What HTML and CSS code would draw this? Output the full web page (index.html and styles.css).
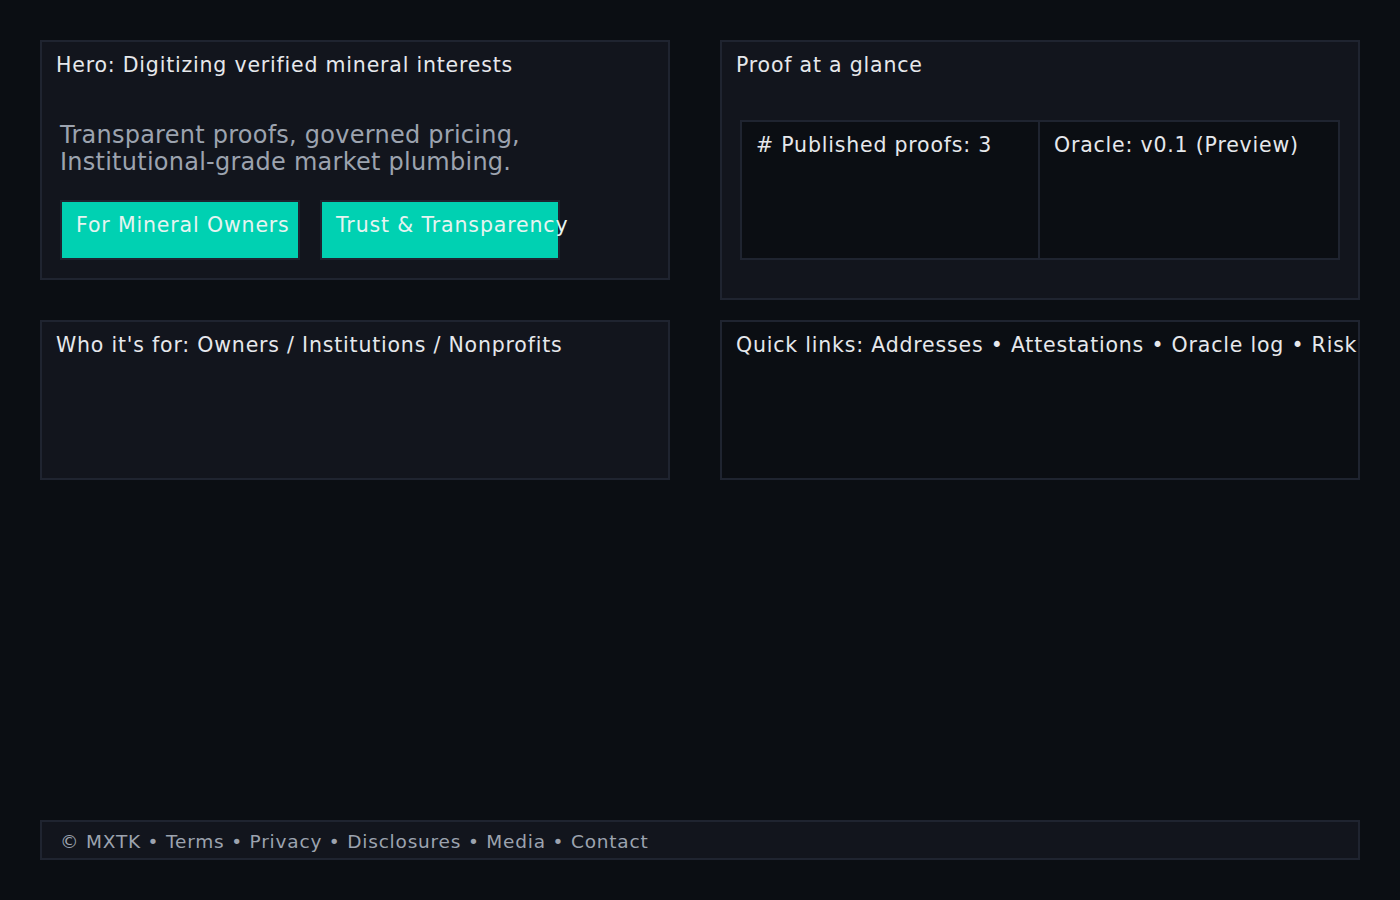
FILE: index.html
```html
<!DOCTYPE html>
<html lang="en">
<head>
<meta charset="utf-8">
<title>MXTK</title>
<link rel="stylesheet" href="styles.css">
</head>
<body>
<div class="page">
  <main class="grid">
    <section class="card hero">
      <h2 class="card-title">Hero: Digitizing verified mineral interests</h2>
      <div class="card-body">
        <p class="subtitle">Transparent proofs, governed pricing,<br>Institutional-grade market plumbing.</p>
        <div class="actions">
          <a class="btn">For Mineral Owners</a>
          <a class="btn">Trust &amp; Transparency</a>
        </div>
      </div>
    </section>
    <section class="card proof">
      <h2 class="card-title">Proof at a glance</h2>
      <div class="card-body">
        <div class="stats">
          <div class="stat">
            <div class="stat-text"># Published proofs: 3</div>
          </div>
          <div class="stat">
            <div class="stat-text">Oracle: v0.1 (Preview)</div>
          </div>
        </div>
      </div>
    </section>
    <section class="card short">
      <h2 class="card-title">Who it's for: Owners / Institutions / Nonprofits</h2>
    </section>
    <section class="card short dark">
      <h2 class="card-title">Quick links: Addresses • Attestations • Oracle log • Risk</h2>
    </section>
  </main>
  <footer class="footer">© MXTK • Terms • Privacy • Disclosures • Media • Contact</footer>
</div>
</body>
</html>
```

FILE: styles.css
```css
* { box-sizing: border-box; }
html, body {
  margin: 0;
  padding: 0;
  background: #0b0e13;
  color: #e6e8ec;
  font-family: "DejaVu Sans", sans-serif;
}
.page {
  min-height: 900px;
  padding: 40px;
  display: flex;
  flex-direction: column;
}
.grid {
  display: grid;
  grid-template-columns: 630px 640px;
  column-gap: 50px;
  row-gap: 20px;
  align-items: start;
}
.card {
  background: #12151d;
  border: 2px solid #1f2430;
}
.card.dark { background: #0b0e13; }
.hero { height: 240px; }
.proof { height: 260px; }
.short { height: 160px; }
.card-title {
  margin: 0;
  font-weight: normal;
  font-size: 20.5px;
  line-height: 23px;
  letter-spacing: 0.8px;
  padding: 12px 14px 43px;
  white-space: nowrap;
}
.card-body {
  padding: 0 18px 18px;
}
.subtitle {
  margin: 2px 0 0;
  font-size: 24px;
  line-height: 27px;
  letter-spacing: 0.25px;
  color: #9ca3af;
}
.actions {
  display: flex;
  gap: 20px;
  margin-top: 24px;
}
.btn {
  display: block;
  width: 240px;
  height: 60px;
  background: #00d1b2;
  border: 2px solid #1f2430;
  padding: 12px 14px;
  font-size: 20.5px;
  line-height: 23px;
  letter-spacing: 0.85px;
  color: #e6f4f1;
  white-space: nowrap;
}
.stats {
  display: flex;
}
.stat {
  width: 300px;
  height: 140px;
  background: #0b0e13;
  border: 2px solid #1f2430;
  padding: 12px 14px;
}
.stat + .stat { border-left: 0; }
.stat-text {
  font-size: 20.5px;
  line-height: 23px;
  letter-spacing: 0.8px;
  white-space: nowrap;
}
.footer {
  margin-top: auto;
  height: 40px;
  background: #12151d;
  border: 2px solid #1f2430;
  padding: 2px 18px 0;
  display: flex;
  align-items: center;
  font-size: 18.5px;
  letter-spacing: 0.8px;
  color: #9ca3af;
}
```
